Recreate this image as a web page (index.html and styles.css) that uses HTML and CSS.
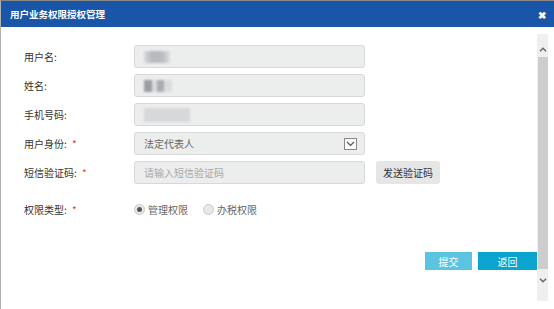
FILE: index.html
```html
<!DOCTYPE html>
<html lang="zh-CN">
<head>
  <meta charset="UTF-8">
  <title>用户业务权限授权管理</title>
  <link rel="stylesheet" href="styles.css">
</head>
<body>
  <div class="dialog">
    <div class="dialog-head">
      <span class="dialog-title">用户业务权限授权管理</span>
      <span class="close">&#10006;</span>
    </div>
    <div class="dialog-body">
      <div class="content">
        <div class="row">
          <label>用户名:</label>
          <div class="field"><span class="mask mask-a"></span></div>
        </div>
        <div class="row">
          <label>姓名:</label>
          <div class="field"><span class="mask mask-b"></span></div>
        </div>
        <div class="row">
          <label>手机号码:</label>
          <div class="field"><span class="mask mask-c"></span></div>
        </div>
        <div class="row">
          <label>用户身份: <em>*</em></label>
          <div class="field select">
            <span>法定代表人</span>
            <span class="arrow">
              <svg width="9" height="6" viewBox="0 0 9 6"><path d="M1 1l3.5 3.5L8 1" fill="none" stroke="#555" stroke-width="1.2"/></svg>
            </span>
          </div>
        </div>
        <div class="row">
          <label>短信验证码: <em>*</em></label>
          <div class="field placeholder">请输入短信验证码</div>
          <button class="send">发送验证码</button>
        </div>
        <div class="row radio-row">
          <label>权限类型: <em>*</em></label>
          <div class="radios">
            <span class="radio"><i class="dot checked"></i>管理权限</span>
            <span class="radio"><i class="dot"></i>办税权限</span>
          </div>
        </div>
        <div class="actions">
          <button class="btn btn-submit">提交</button>
          <button class="btn btn-back">返回</button>
        </div>
      </div>
      <div class="scrollbar">
        <div class="sb-arrow sb-up">
          <svg width="8" height="5" viewBox="0 0 8 5"><path d="M1 4.2L4 1.2l3 3" fill="none" stroke="#666" stroke-width="1.4"/></svg>
        </div>
        <div class="sb-thumb"></div>
        <div class="sb-arrow sb-down">
          <svg width="8" height="5" viewBox="0 0 8 5"><path d="M1 0.8L4 3.8l3-3" fill="none" stroke="#666" stroke-width="1.4"/></svg>
        </div>
      </div>
    </div>
  </div>
</body>
</html>
```

FILE: styles.css
```css
* {
  box-sizing: border-box;
}
html, body {
  margin: 0;
  padding: 0;
  background: #fff;
}
body {
  font-family: "Noto Sans CJK SC", "Liberation Sans", sans-serif;
  font-size: 10px;
  color: #333;
}
.dialog {
  width: 554px;
  height: 309px;
  border-top: 1px solid #888;
  border-left: 1px solid #b0b0b0;
  display: flex;
  flex-direction: column;
}
.dialog-head {
  height: 26px;
  background: #1a56a8;
  color: #fff;
  display: flex;
  align-items: center;
  justify-content: space-between;
  padding: 0 8px 0 9px;
}
.dialog-title {
  font-weight: bold;
  font-size: 9.5px;
}
.close {
  font-size: 10px;
  font-weight: bold;
}
.dialog-body {
  flex: 1;
  display: flex;
  padding: 7px 6px 8px 0;
}
.content {
  flex: 1;
  padding: 11px 0 0 23px;
}
.row {
  display: flex;
  align-items: center;
  height: 23px;
  margin-bottom: 6px;
}
.row label {
  width: 110px;
  font-size: 10px;
  color: #333;
}
.row em {
  color: #e33;
  font-style: normal;
  margin-left: 3px;
}
.field {
  width: 231px;
  height: 23px;
  background: #eceded;
  border: 1px solid #d8d8d8;
  border-radius: 3px;
  display: flex;
  align-items: center;
  padding: 0 9px;
  color: #666;
  position: relative;
}
.placeholder {
  color: #a8a8a8;
}
.select {
  justify-content: space-between;
  padding-right: 7px;
}
.arrow {
  width: 13px;
  height: 12px;
  border: 1px solid #888;
  background: #fafafa;
  display: flex;
  align-items: center;
  justify-content: center;
}
.mask {
  height: 12px;
  filter: blur(1.2px);
}
.mask-a {
  width: 26px;
  background: linear-gradient(90deg, #d6d9dc, #b6babe 30%, #b8bcc0 70%, #dcdfe1);
}
.mask-b {
  width: 28px;
  background: linear-gradient(90deg, #9a9ea2 0 30%, #d8dadc 30% 45%, #a9adb1 45% 70%, #dadcde 70%);
}
.mask-c {
  width: 46px;
  height: 14px;
  background: #d6d8da;
}
.send {
  margin-left: 11px;
  height: 23px;
  width: 64px;
  border: none;
  border-radius: 3px;
  background: #e6e6e6;
  color: #333;
  font-family: inherit;
  font-size: 10px;
  padding: 0;
}
.radio-row {
  margin-top: 14px;
}
.radios {
  display: flex;
  gap: 15px;
  color: #666;
}
.radio {
  display: flex;
  align-items: center;
}
.dot {
  width: 11px;
  height: 11px;
  border-radius: 50%;
  border: 1px solid #c8c8c8;
  background: #e8e8e8;
  margin-right: 3px;
  display: inline-block;
  position: relative;
}
.dot.checked::after {
  content: "";
  position: absolute;
  left: 2px;
  top: 2px;
  width: 5px;
  height: 5px;
  border-radius: 50%;
  background: #555;
}
.actions {
  display: flex;
  justify-content: flex-end;
  gap: 6px;
  margin-top: 31px;
}
.btn {
  height: 18px;
  border: none;
  color: #fff;
  font-family: inherit;
  font-size: 10px;
  padding: 0;
}
.btn-submit {
  width: 47px;
  background: #5bc4e0;
}
.btn-back {
  width: 59px;
  background: #0aa4cf;
}
.scrollbar {
  width: 11px;
  background: #efefef;
  display: flex;
  flex-direction: column;
  align-items: center;
}
.sb-arrow {
  display: flex;
  justify-content: center;
}
.sb-up {
  height: 23px;
  align-items: flex-end;
  padding-bottom: 5px;
}
.sb-down {
  height: 32px;
  align-items: flex-start;
  padding-top: 9px;
}
.sb-thumb {
  flex: 1;
  width: 10px;
  background: #cdcdcd;
}
```
